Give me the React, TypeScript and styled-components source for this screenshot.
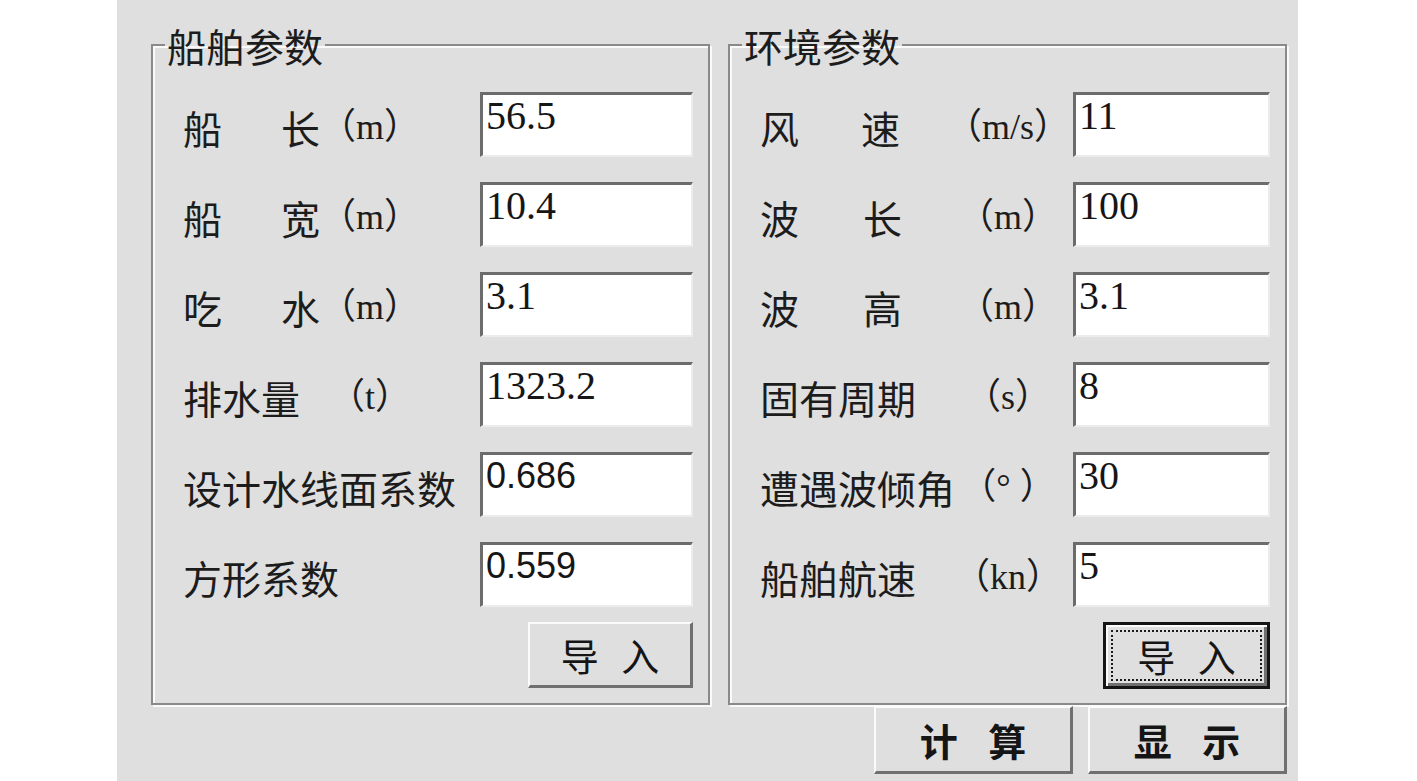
import React from 'react'
import styled, { createGlobalStyle } from 'styled-components'

const GlobalStyle = createGlobalStyle`
  html, body {
    margin: 0;
    padding: 0;
    background: #ffffff;
  }
  body {
    font-family: "Noto Sans CJK SC", "Noto Sans", sans-serif;
  }
`

const Page = styled.div`
  display: flex;
  padding-left: 117px;
`

const Dialog = styled.div`
  box-sizing: border-box;
  width: 1181px;
  height: 781px;
  background: #dfdfdf;
  padding: 25px 11px 0 34px;
  display: grid;
  grid-template-columns: 559px 559px;
  column-gap: 18px;
  row-gap: 1px;
  align-content: start;
`

const GroupBox = styled.fieldset`
  box-sizing: border-box;
  min-width: 0;
  height: 680px;
  margin: 0;
  padding: 27px 15px 0 12px;
  border: 2px solid #8a8a8a;
  box-shadow: inset 2px 2px 0 #fafafa, 2px 2px 0 #fafafa;
  display: flex;
  flex-direction: column;
`

const Title = styled.legend`
  padding: 0 2px;
  font-size: 39px;
  line-height: 40px;
  color: #1c1c1c;
`

const Rows = styled.div`
  display: grid;
  grid-auto-rows: 65px;
  row-gap: 25px;
  padding-left: 18px;
`

const Row = styled.div<{ $cols: string }>`
  display: grid;
  grid-template-columns: ${({ $cols }) => $cols};
  align-items: center;
`

const Name = styled.div<{ $spread?: number; $span?: boolean }>`
  display: flex;
  justify-content: space-between;
  width: ${({ $spread }) => ($spread ? `${$spread}px` : 'auto')};
  grid-column: ${({ $span }) => ($span ? '1 / 4' : 'auto')};
  padding-top: 4px;
  font-size: 39px;
  line-height: 48px;
  color: #1c1c1c;
  white-space: nowrap;
`

const Unit = styled.div`
  padding-top: 4px;
  text-align: center;
  font-family: "Liberation Serif", "Noto Sans CJK SC", serif;
  font-size: 36px;
  line-height: 48px;
  color: #1c1c1c;
  white-space: nowrap;
`

const Field = styled.div<{ $sans?: boolean }>`
  grid-column: 4;
  box-sizing: border-box;
  height: 65px;
  padding: 1px 0 0 3px;
  background: #ffffff;
  border-style: solid;
  border-width: 3px 2px 2px 3px;
  border-color: #6c6c6c #ececec #ececec #6c6c6c;
  font-family: ${({ $sans }) => ($sans ? '"Liberation Sans", sans-serif' : '"Liberation Serif", serif')};
  font-size: ${({ $sans }) => ($sans ? '36px' : '40px')};
  line-height: 40px;
  color: #161616;
`

const Button = styled.button<{ $w: number; $h: number; $gap: number; $bold?: boolean; $default?: boolean }>`
  box-sizing: border-box;
  width: ${({ $w }) => $w}px;
  height: ${({ $h }) => $h}px;
  padding: 0;
  background: #dfdfdf;
  border-style: solid;
  border-width: 2px 3px 3px 2px;
  border-color: #fbfbfb #707070 #707070 #fbfbfb;
  font-family: "Noto Sans CJK SC", sans-serif;
  font-size: 38px;
  font-weight: ${({ $bold }) => ($bold ? 700 : 400)};
  word-spacing: ${({ $gap }) => $gap}px;
  line-height: 1;
  color: #151515;

  ${({ $default }) =>
    $default &&
    `
    border: 3px solid #151515;
    box-shadow: inset 2px 2px 0 #fbfbfb, inset -3px -3px 0 #707070;
    outline: 2px dotted #1a1a1a;
    outline-offset: -10px;
  `}
`

const BoxActions = styled.div`
  display: flex;
  justify-content: flex-end;
  margin-top: 15px;
`

const Actions = styled.div`
  grid-column: 1 / -1;
  display: flex;
  justify-content: flex-end;
  gap: 15px;
`

type Param = {
  name: string
  unit?: string
  value: string
  spread?: number
  sans?: boolean
}

const ship: Param[] = [
  { name: '船长', unit: '（m）', value: '56.5', spread: 137 },
  { name: '船宽', unit: '（m）', value: '10.4', spread: 137 },
  { name: '吃水', unit: '（m）', value: '3.1', spread: 137 },
  { name: '排水量', unit: '（t）', value: '1323.2' },
  { name: '设计水线面系数', value: '0.686', sans: true },
  { name: '方形系数', value: '0.559', sans: true },
]

const env: Param[] = [
  { name: '风速', unit: '（m/s）', value: '11', spread: 140 },
  { name: '波长', unit: '（m）', value: '100', spread: 142 },
  { name: '波高', unit: '（m）', value: '3.1', spread: 142 },
  { name: '固有周期', unit: '（s）', value: '8' },
  { name: '遭遇波倾角', unit: '（° ）', value: '30' },
  { name: '船舶航速', unit: '（kn）', value: '5' },
]

const Group: React.FC<{ title: string; cols: string; params: Param[]; focused?: boolean }> = ({
  title,
  cols,
  params,
  focused,
}) => (
  <GroupBox>
    <Title>{title}</Title>
    <Rows>
      {params.map((p) => (
        <Row key={p.name} $cols={cols}>
          <Name $spread={p.spread} $span={!p.unit}>
            {p.spread ? p.name.split('').map((c) => <span key={c}>{c}</span>) : p.name}
          </Name>
          {p.unit && <Unit>{p.unit}</Unit>}
          <Field $sans={p.sans}>{p.value}</Field>
        </Row>
      ))}
    </Rows>
    <BoxActions>
      <Button $w={focused ? 167 : 165} $h={focused ? 67 : 66} $gap={14} $default={focused}>
        导 入
      </Button>
    </BoxActions>
  </GroupBox>
)

const App: React.FC = () => (
  <>
    <GlobalStyle />
    <Page>
      <Dialog>
        <Group title="船舶参数" cols="137px 100px 1fr 213px" params={ship} />
        <Group title="环境参数" cols="186px 124px 1fr 197px" params={env} focused />
        <Actions>
          <Button $w={199} $h={68} $gap={22} $bold>
            计 算
          </Button>
          <Button $w={199} $h={68} $gap={22} $bold>
            显 示
          </Button>
        </Actions>
      </Dialog>
    </Page>
  </>
)

export default App
